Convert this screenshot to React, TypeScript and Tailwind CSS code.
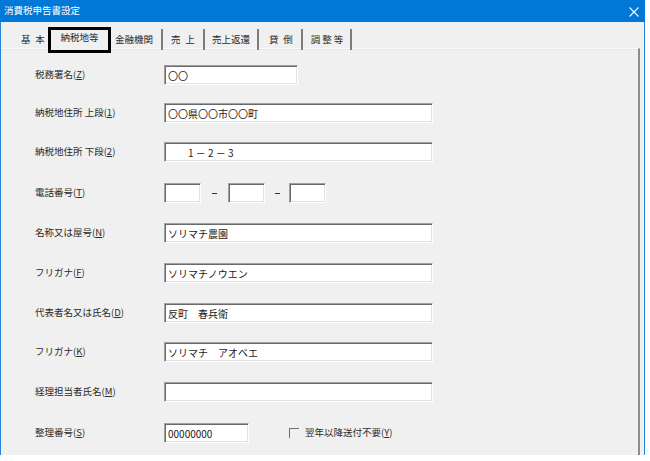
import React from "react";

type Row = {
  label: string;
  key: string;
  mt: string;
  kind: "text" | "phone" | "num";
  w?: string;
  value?: string;
};

const rows: Row[] = [
  { label: "税務署名", key: "Z", mt: "mt-0", kind: "text", w: "w-[134px]", value: "〇〇" },
  { label: "納税地住所 上段", key: "1", mt: "mt-[18px]", kind: "text", w: "w-[269px]", value: "〇〇県〇〇市〇〇町" },
  { label: "納税地住所 下段", key: "2", mt: "mt-[19px]", kind: "text", w: "w-[269px]", value: "　　1 － 2 － 3" },
  { label: "電話番号", key: "T", mt: "mt-[21px]", kind: "phone" },
  { label: "名称又は屋号", key: "N", mt: "mt-[20px]", kind: "text", w: "w-[269px]", value: "ソリマチ農園" },
  { label: "フリガナ", key: "F", mt: "mt-[20px]", kind: "text", w: "w-[269px]", value: "ソリマチノウエン" },
  { label: "代表者名又は氏名", key: "D", mt: "mt-[20px]", kind: "text", w: "w-[269px]", value: "反町　春兵衛" },
  { label: "フリガナ", key: "K", mt: "mt-[19px]", kind: "text", w: "w-[269px]", value: "ソリマチ　アオベエ" },
  { label: "経理担当者氏名", key: "M", mt: "mt-[20px]", kind: "text", w: "w-[269px]", value: "" },
  { label: "整理番号", key: "S", mt: "mt-[21px]", kind: "num", w: "w-[85px]", value: "00000000" },
];

const box =
  "h-[20px] bg-white border border-t-[#a0a0a0] border-l-[#a0a0a0] border-b-white border-r-white shadow-[inset_1px_1px_0_#696969,inset_-1px_-1px_0_#e3e3e3] flex items-center pl-[3px] text-[10px] text-[#1a1a1a] whitespace-nowrap overflow-hidden";

function Input({ w, value }: { w: string; value?: string }) {
  return <div className={`${box} ${w}`}>{value}</div>;
}

function Mn({ text, k }: { text: string; k: string }) {
  return (
    <span>
      {text}(<span className="underline underline-offset-1">{k}</span>)
    </span>
  );
}

export default function App() {
  return (
    <div
      className="w-[650px] h-[461px] bg-white overflow-hidden"
      style={{ fontFamily: '"Noto Sans CJK JP", "Noto Sans", sans-serif' }}
    >
      <div className="w-[645px] h-[455px] flex flex-col bg-[#f0f0f0] border-x border-[#2a82d8]">
        {/* title bar */}
        <div className="h-[22px] bg-[#0078d7] flex items-center justify-between pl-[4px] pr-[6px] -mx-px">
          <span className="text-white text-[9.5px] leading-none">消費税申告書設定</span>
          <svg width="10" height="10" viewBox="0 0 10 10" className="mt-[2px]">
            <path d="M0.5 0.5 L9.5 9.5 M9.5 0.5 L0.5 9.5" stroke="white" strokeWidth="1.1" />
          </svg>
        </div>
        {/* tabs */}
        <div className="h-[26px] flex items-start text-[9.5px] leading-none text-[#2a2a2a] relative z-10">
          <span className="ml-[20px] mt-[13px] w-[24px] text-center whitespace-nowrap">基&#x2002;本</span>
          <div className="ml-[3px] mt-[5px] w-[63px] h-[26px] border-[3px] border-black bg-[#f0f0f0] flex items-center justify-center whitespace-nowrap">
            <span className="-mt-[5px]">納税地等</span>
          </div>
          <span className="ml-[4px] mt-[13px] w-[37px] text-center whitespace-nowrap">金融機関</span>
          <span className="ml-[9px] mt-[7px] w-[2px] h-[21px] bg-[#7d7d7d]" />
          <span className="ml-[8px] mt-[13px] w-[24px] text-center whitespace-nowrap">売&#x2002;上</span>
          <span className="ml-[8px] mt-[7px] w-[2px] h-[21px] bg-[#7d7d7d]" />
          <span className="ml-[7px] mt-[13px] w-[38px] text-center whitespace-nowrap">売上返還</span>
          <span className="ml-[7px] mt-[7px] w-[2px] h-[21px] bg-[#7d7d7d]" />
          <span className="ml-[8px] mt-[13px] w-[28px] text-center whitespace-nowrap">貸&#x2002;倒</span>
          <span className="ml-[6px] mt-[7px] w-[2px] h-[21px] bg-[#7d7d7d]" />
          <span className="ml-[6px] mt-[13px] w-[36px] text-center whitespace-nowrap">調&#x2009;整&#x2009;等</span>
          <span className="ml-[5px] mt-[7px] w-[2px] h-[21px] bg-[#7d7d7d]" />
        </div>
        {/* panel */}
        <div className="flex-1 mr-[4px] border-t border-t-[#fbfbfb] border-r-2 border-r-[#8c8c8c] shadow-[inset_0_1px_0_#e6e6e6] pl-[34px] pt-[16px] flex flex-col">
          {rows.map((r, i) => (
            <div key={i} className={`flex items-center h-[20px] ${r.mt}`}>
              <span className="w-[129px] text-[9.5px] leading-none text-[#2a2a2a] whitespace-nowrap">
                <Mn text={r.label} k={r.key} />
              </span>
              {r.kind === "text" && <Input w={r.w!} value={r.value} />}
              {r.kind === "phone" && (
                <div className="flex items-center">
                  <Input w="w-[37px]" />
                  <span className="w-[27px] flex justify-center">
                    <span className="w-[5px] h-px bg-[#333]" />
                  </span>
                  <Input w="w-[37px]" />
                  <span className="w-[24px] flex justify-center">
                    <span className="w-[5px] h-px bg-[#333]" />
                  </span>
                  <Input w="w-[37px]" />
                </div>
              )}
              {r.kind === "num" && (
                <div className="flex items-center">
                  <Input w={r.w!} value={r.value} />
                  <span className="ml-[40px] w-[10px] h-[10px] bg-[#f0f0f0] border-t border-l border-[#6f6f6f]" />
                  <span className="ml-[6px] text-[9.5px] leading-none text-[#2a2a2a] whitespace-nowrap">
                    <Mn text="翌年以降送付不要" k="Y" />
                  </span>
                </div>
              )}
            </div>
          ))}
        </div>
      </div>
    </div>
  );
}
